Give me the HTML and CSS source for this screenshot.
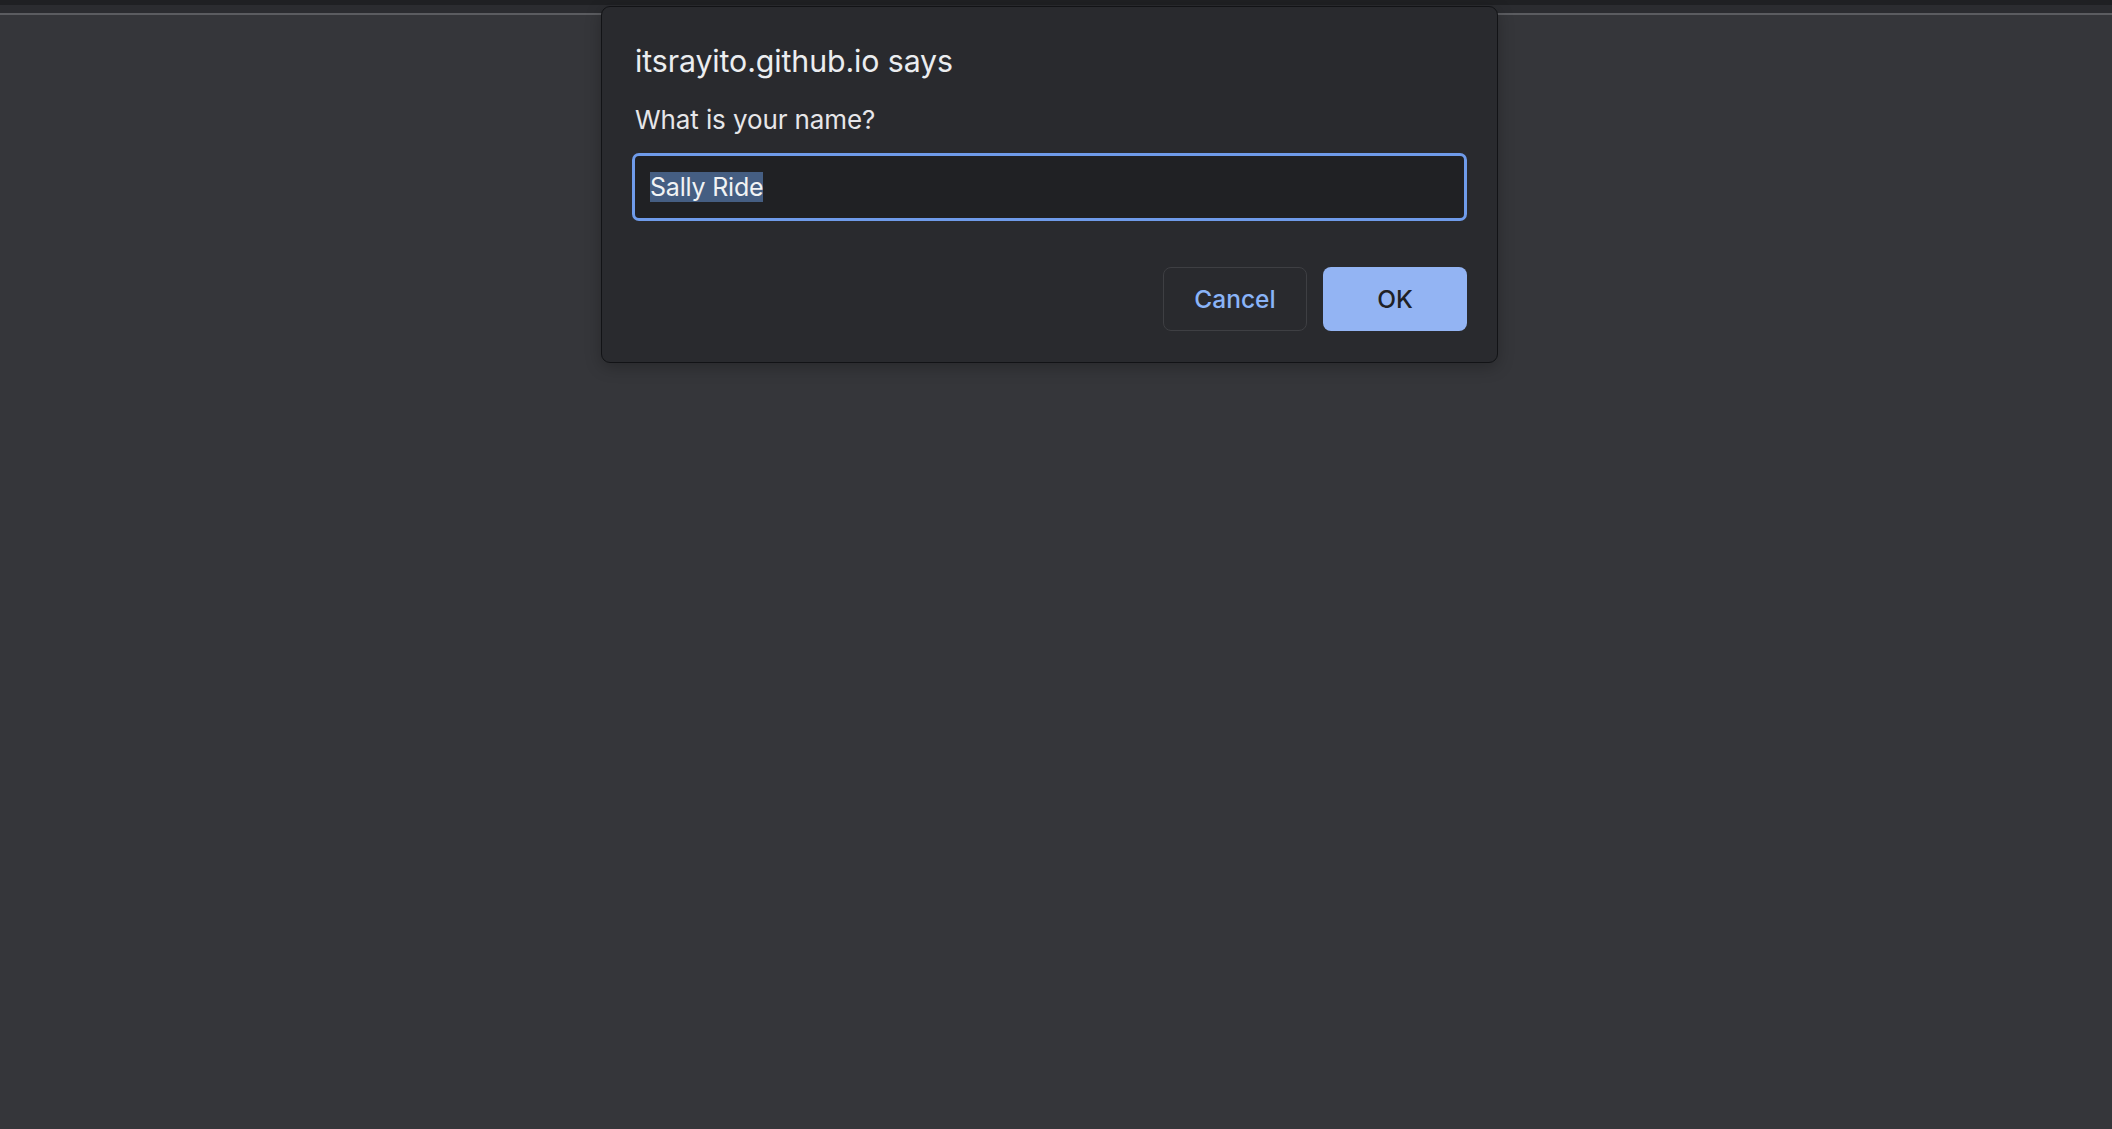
FILE: index.html
```html
<!DOCTYPE html>
<html lang="en">
<head>
<meta charset="utf-8">
<title>Prompt</title>
<link rel="stylesheet" href="styles.css">
</head>
<body>
<div class="chrome-top">
  <div class="strip-dark"></div>
  <div class="strip-mid"></div>
  <div class="strip-line"></div>
</div>
<main class="page"></main>
<div class="dialog" role="dialog" aria-labelledby="dlg-title">
  <h1 class="dialog-title" id="dlg-title">itsrayito.github.io says</h1>
  <p class="dialog-message">What is your name?</p>
  <div class="dialog-input"><span class="sel">Sally Ride</span></div>
  <div class="dialog-actions">
    <button class="btn btn-cancel">Cancel</button>
    <button class="btn btn-ok">OK</button>
  </div>
</div>
</body>
</html>
```
FILE: styles.css
```css
html, body {
  margin: 0;
  padding: 0;
  height: 100%;
}
body {
  background: #35363a;
  font-family: Inter, "Noto Sans", sans-serif;
  overflow: hidden;
}
.chrome-top .strip-dark {
  height: 5px;
  background: #1f2023;
}
.chrome-top .strip-mid {
  height: 8px;
  background: #2b2c30;
}
.chrome-top .strip-line {
  height: 2px;
  background: #5b5c60;
}
.dialog {
  position: absolute;
  left: 601px;
  top: 6px;
  width: 835px;
  padding: 0 30px 31px 30px;
  background: #292a2e;
  border: 1px solid #121316;
  border-radius: 9px;
  box-shadow: 0 4px 16px rgba(0,0,0,0.25);
  display: flex;
  flex-direction: column;
}
.dialog-title {
  margin: 36px 0 0 0;
  padding-left: 3px;
  font-size: 30.3px;
  line-height: 36px;
  font-weight: 400;
  color: #ebedf0;
  letter-spacing: -0.1px;
}
.dialog-message {
  margin: 25px 0 0 0;
  padding-left: 3px;
  font-size: 26px;
  line-height: 32px;
  color: #e6e6e9;
  letter-spacing: -0.1px;
}
.dialog-input {
  margin-top: 17px;
  height: 62px;
  border: 3px solid #6f9bea;
  border-radius: 7px;
  background: #202124;
  display: flex;
  align-items: center;
  padding: 0 15px;
}
.sel {
  display: inline-block;
  height: 30px;
  line-height: 30px;
  font-size: 25px;
  background: #455e82;
  color: #f1f3f4;
  letter-spacing: -0.2px;
}
.dialog-actions {
  margin-top: 46px;
  display: flex;
  justify-content: flex-end;
  gap: 16px;
}
.btn {
  height: 64px;
  border-radius: 8px;
  font-family: Inter, "Noto Sans", sans-serif;
  font-size: 24.5px;
  font-weight: 500;
  padding: 0;
  cursor: pointer;
}
.btn-cancel {
  width: 144px;
  background: #292a2e;
  border: 1px solid #3e3f43;
  color: #8ab4f8;
}
.btn-ok {
  width: 144px;
  background: #93b4f3;
  border: none;
  color: #202124;
}
```
